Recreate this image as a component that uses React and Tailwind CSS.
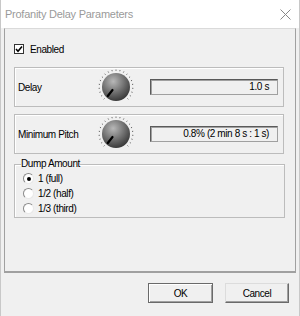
import React from "react";

const ui = { fontFamily: '"Liberation Sans", Arial, sans-serif' };

function Knob() {
  // 270 degree scale of small ticks around the dial
  const ticks = [];
  for (let i = 0; i <= 20; i++) {
    const a = ((225 - i * 13.5) * Math.PI) / 180;
    const x1 = 18 + Math.cos(a) * 16.2;
    const y1 = 18 - Math.sin(a) * 16.2;
    const x2 = 18 + Math.cos(a) * 17.4;
    const y2 = 18 - Math.sin(a) * 17.4;
    ticks.push(<line key={i} x1={x1} y1={y1} x2={x2} y2={y2} stroke="#555" strokeWidth="0.9" />);
  }
  return (
    <svg width="36" height="36" viewBox="0 0 36 36" className="shrink-0">
      <defs>
        <radialGradient id="kb" cx="0.4" cy="0.3" r="0.75">
          <stop offset="0" stopColor="#b8b8b8" />
          <stop offset="0.55" stopColor="#6e6e6e" />
          <stop offset="1" stopColor="#333" />
        </radialGradient>
      </defs>
      {ticks}
      <circle cx="18" cy="18" r="14" fill="url(#kb)" />
      <line x1="14.5" y1="21" x2="9.8" y2="27" stroke="#000" strokeWidth="2.2" strokeLinecap="round" />
    </svg>
  );
}

function ParamRow({ label, value }) {
  return (
    <div className="flex items-center h-[40px] border border-[#bcbcbc] shadow-[inset_1px_1px_0_#fff]">
      <div className="w-[83px] pl-[3px] text-[10px] tracking-[-0.4px] text-black">{label}</div>
      <Knob />
      <div className="ml-[16px] w-[128px] h-[16px] border border-[#5a5a5a] border-r-[#a0a0a0] border-b-[#a0a0a0] shadow-[inset_1px_1px_0_#a0a0a0] flex items-center justify-end pr-[8px] text-[10px] tracking-[-0.4px] text-black leading-none">
        {value}
      </div>
    </div>
  );
}

function Radio({ checked, label }) {
  return (
    <div className="flex items-center h-[15px]">
      <div className="w-[11px] h-[11px] rounded-full border border-[#8a8a8a] border-r-[#e8e8e8] border-b-[#e8e8e8] bg-white flex items-center justify-center">
        {checked && <div className="w-[4px] h-[4px] rounded-full bg-black" />}
      </div>
      <span className="ml-[4px] text-[10px] tracking-[-0.4px] text-black">{label}</span>
    </div>
  );
}

export default function App() {
  return (
    <div className="w-[300px] h-[316px] bg-[#f0f0f0] flex flex-col border-l border-r border-[#c8c8c8]" style={ui}>
      {/* title bar */}
      <div className="h-[28px] bg-white flex items-center justify-between pl-[4px] pr-[8px]">
        <span className="text-[11px] tracking-[-0.25px] text-[#9a9a9a]">Profanity Delay Parameters</span>
        <svg width="11" height="11" viewBox="0 0 11 11">
          <path d="M0.5 0.5 L10.5 10.5 M10.5 0.5 L0.5 10.5" stroke="#888" strokeWidth="1" />
        </svg>
      </div>

      {/* page */}
      <div className="mx-[3px] h-[245px] border-t border-[#dadada] border-l border-l-[#a0a0a0] border-r border-r-[#a0a0a0] border-b-2 border-b-[#a0a0a0] px-[9px]">
        <div className="flex items-center mt-[15px] h-[10px]">
          <div className="w-[10px] h-[10px] border border-[#333] bg-white flex items-center justify-center">
            <svg width="8" height="8" viewBox="0 0 8 8">
              <path d="M1 4 L3 6.2 L7 1.5" stroke="#000" strokeWidth="1.6" fill="none" />
            </svg>
          </div>
          <span className="ml-[6px] text-[10px] tracking-[-0.4px] text-black">Enabled</span>
        </div>

        <div className="mt-[13px] w-[270px] flex flex-col gap-[7px]">
          <ParamRow label="Delay" value="1.0 s" />
          <ParamRow label="Minimum Pitch" value="0.8% (2 min 8 s : 1 s)" />
        </div>

        <fieldset className="mt-[5px] w-[271px] h-[59px] border border-[#bcbcbc] shadow-[inset_1px_1px_0_#fff] pl-[8px] pt-[0px]">
          <legend className="text-[10px] tracking-[-0.4px] text-black ml-[-2px] px-[0px] leading-none">Dump Amount</legend>
          <div className="flex flex-col mt-[2px]">
            <Radio checked label="1 (full)" />
            <Radio label="1/2 (half)" />
            <Radio label="1/3 (third)" />
          </div>
        </fieldset>
      </div>

      {/* buttons */}
      <div className="flex justify-end gap-[12px] pr-[10px] mt-[10px]">
        <button className="w-[65px] h-[20px] bg-[#f0f0f0] border border-[#6a6a6a] shadow-[inset_1px_1px_0_#fff,inset_-1px_-1px_0_#a0a0a0] text-[10px] tracking-[-0.4px] text-black">OK</button>
        <button className="w-[64px] h-[20px] bg-[#f0f0f0] border border-[#dcdcdc] border-r-[#6a6a6a] border-b-[#6a6a6a] shadow-[inset_-1px_-1px_0_#a0a0a0] text-[10px] tracking-[-0.4px] text-black">Cancel</button>
      </div>
    </div>
  );
}
